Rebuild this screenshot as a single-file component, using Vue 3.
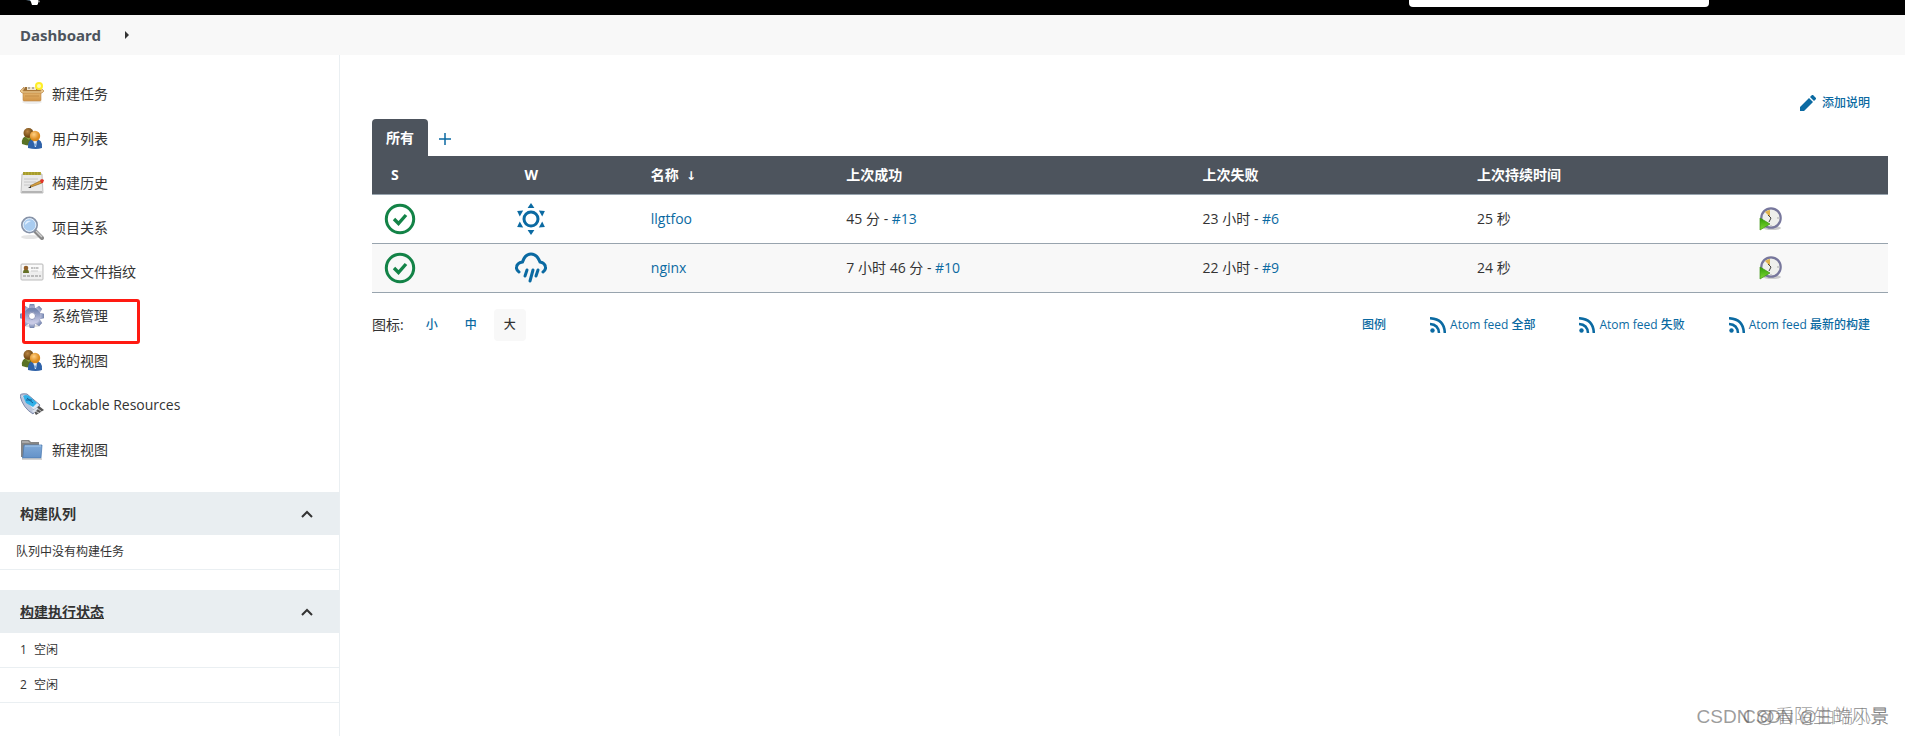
<script setup>
const tasks = [
  { icon: 'box', label: '新建任务' },
  { icon: 'people', label: '用户列表' },
  { icon: 'notepad', label: '构建历史' },
  { icon: 'search', label: '项目关系' },
  { icon: 'card', label: '检查文件指纹' },
  { icon: 'gear', label: '系统管理', marked: true },
  { icon: 'people', label: '我的视图' },
  { icon: 'usb', label: 'Lockable Resources', latin: true },
  { icon: 'folder', label: '新建视图' },
]
const jobs = [
  { name: 'llgtfoo', weather: 'sun', ok: '45 分', okNo: '#13', fail: '23 小时', failNo: '#6', time: '25 秒' },
  { name: 'nginx', weather: 'rain', ok: '7 小时 46 分', okNo: '#10', fail: '22 小时', failNo: '#9', time: '24 秒' },
]
const feeds = ['Atom feed 全部', 'Atom feed 失败', 'Atom feed 最新的构建']
const rays = [0, 60, 120, 180, 240, 300]
const teeth = [0, 45, 90, 135, 180, 225, 270, 315]
</script>

<template>
  <div class="page">
    <svg class="defs" width="0" height="0" aria-hidden="true">
      <defs>
        <linearGradient id="boxFill" x2="0" y2="1"><stop stop-color="#e6b873" /><stop offset="1" stop-color="#d19446" /></linearGradient>
        <linearGradient id="folderFill" x2="0" y2="1"><stop stop-color="#7fa9d8" /><stop offset="1" stop-color="#6492c8" /></linearGradient>
        <linearGradient id="gearFill" x2="0" y2="1"><stop stop-color="#7587b0" /><stop offset="1" stop-color="#c9cbe6" /></linearGradient>
        <radialGradient id="headFill" cx=".4" cy=".35"><stop stop-color="#ffd083" /><stop offset="1" stop-color="#dc8b1e" /></radialGradient>
        <radialGradient id="backFill" cx=".4" cy=".35"><stop stop-color="#b98545" /><stop offset="1" stop-color="#754c15" /></radialGradient>
        <linearGradient id="playFill" x2="0" y2="1"><stop stop-color="#2f9d06" /><stop offset="1" stop-color="#7fd932" /></linearGradient>
      </defs>
    </svg>

    <header class="topbar">
      <svg class="logo" viewBox="0 0 16 6" aria-hidden="true"><path d="M0 0h5v1z" fill="#7c9bb0" /><path d="M4 0h8v4l-1 1H6L5 2z" fill="#fff" /><path d="M12 0l2 1-1 2-1-1z" fill="#999" /></svg>
      <input class="search" type="text" aria-label="查找" />
    </header>

    <nav class="crumbs">
      <a href="#">Dashboard</a>
      <svg width="5" height="8" viewBox="0 0 5 8" aria-hidden="true"><path d="M0 0l4 4-4 4z" fill="#333" /></svg>
    </nav>

    <div class="body">
      <aside class="side">
        <nav class="tasks">
          <a v-for="t in tasks" :key="t.label" href="#" class="task">
            <svg v-if="t.icon === 'box'" viewBox="0 0 24 24">
              <ellipse cx="12" cy="20" rx="10" ry="2" fill="#eee" />
              <path d="M5 5h14l2 4H3z" fill="#9b6f35" /><path d="M7 5h9v3H7z" fill="#f2e5ce" /><path d="M8 6h2m2 0h2" stroke="#777" />
              <path d="M3 9h18v9q0 1-1 1H4q-1 0-1-1z" fill="url(#boxFill)" stroke="#bd8746" stroke-width=".6" />
              <path d="M4 5L0 9l2 2h20l2-2-4-4 1 4H3z" fill="#eac98f" stroke="#b27b38" stroke-width=".6" />
              <path d="M5 14h14" stroke="#c48e48" />
              <circle cx="19" cy="4" r="4" fill="#ffee26" /><circle cx="19" cy="4" r="2" fill="#fffbb0" />
            </svg>
            <svg v-else-if="t.icon === 'people'" viewBox="0 0 24 24">
              <path d="M2 17q-1-8 6-8t8 8q-5 3-14 0z" fill="#597225" /><path d="M5 10l4 3 2-3z" fill="#8aa342" />
              <circle cx="8.500" cy="6" r="5" fill="url(#backFill)" />
              <path d="M8 21q-1-9 7-9 8 0 7 9-6 2-14 0z" fill="#2f62a8" /><path d="M13 13h4l-1 7h-1z" fill="#f2f7ff" /><path d="M15 15l1 3-1 2-1-2z" fill="#6798cf" />
              <circle cx="15" cy="9" r="5.200" fill="url(#headFill)" />
            </svg>
            <svg v-else-if="t.icon === 'notepad'" viewBox="0 0 24 24">
              <path d="M2 3h20l1 19H1z" fill="#e9e9e9" stroke="#aaa" stroke-width=".7" /><path d="M2 20h20v2H2z" fill="#b4b4b4" />
              <path d="M3 1h18v3H3z" fill="#b5ab38" /><path d="M4 1v3m3-3v3m3-3v3m3-3v3m3-3v3m3-3v3" stroke="#9a8e24" />
              <path d="M4 8h14M4 11h12M4 14h8" stroke="#c6c6c6" />
              <path d="M10 15l10-5 2 2-11 4z" fill="#dca43f" stroke="#8c6420" stroke-width=".7" /><path d="M20 9l2-1 2 1-1 3-2 0z" fill="#e0342a" /><path d="M8 17l3-2v2z" fill="#333" />
            </svg>
            <svg v-else-if="t.icon === 'search'" viewBox="0 0 24 24">
              <ellipse cx="10" cy="21" rx="9" ry="2" fill="#e5e5e5" />
              <path d="M15 15l7 7" stroke="#888" stroke-width="4" stroke-linecap="round" /><path d="M16 15l6 6" stroke="#ccc" stroke-width="1.500" />
              <circle cx="9.500" cy="9" r="7.500" fill="#a9ccf0" stroke="#8793a8" stroke-width="2" /><circle cx="9.500" cy="9" r="6.400" fill="none" stroke="#e8f3ff" />
              <path d="M5 9q0-5 6-4-3 1-6 4z" fill="#e2f0ff" />
            </svg>
            <svg v-else-if="t.icon === 'card'" viewBox="0 0 24 24">
              <rect x="1" y="4" width="22" height="16" rx="1" fill="#eee" stroke="#bbb" /><path d="M2 5h20v6H2z" fill="#fafafa" />
              <path d="M3 13q0-4 3-4t3 4z" fill="#657127" /><circle cx="6" cy="8" r="2.300" fill="#92602a" />
              <path d="M11 8h8" stroke="#888" stroke-dasharray="2 .5" /><path d="M11 11h7" stroke="#ccc" /><path d="M3 16h18" stroke="#888" stroke-dasharray="3 1" />
            </svg>
            <svg v-else-if="t.icon === 'gear'" viewBox="0 0 24 24">
              <ellipse cx="12" cy="22" rx="8" ry="1" fill="#ddd" />
              <path v-for="a in teeth" :key="a" d="M9 5l1-5h4l1 5z" fill="url(#gearFill)" stroke="#7781aa" stroke-width=".5" :transform="`rotate(${a} 12 12)`" />
              <circle cx="12" cy="12" r="6" fill="none" stroke="url(#gearFill)" stroke-width="5" /><circle cx="12" cy="12" r="3.500" fill="#fff" stroke="#8790b5" />
            </svg>
            <svg v-else-if="t.icon === 'usb'" viewBox="0 0 24 24">
              <path d="M0 3q0-3 7-2l13 11-7 9Q3 15 0 3z" fill="#bbc5da" stroke="#54628c" stroke-width=".7" /><path d="M2 3l5-1 12 10-5 5z" fill="#e3e9f4" />
              <path d="M3 3q3-2 6 0l8 7-4 4-7-4z" fill="#31b0e8" /><path d="M7 5l6 5M6 7l6 0" stroke="#145d94" />
              <path d="M13 17l6-4 5 4-8 5z" fill="#555" /><path d="M17 15l5 4M15 18l4 2" stroke="#ccc" /><path d="M12 18l5-4 1 2-4 4z" fill="#dbe2ee" />
            </svg>
            <svg v-else viewBox="0 0 24 24">
              <path d="M1 3q0-1 1-1h7l2 2h8v15H1z" fill="#858585" /><path d="M2 3h6l2 2H2z" fill="#aaa" />
              <path d="M4 7h18l-1 13H2q1 0 1-2z" fill="url(#folderFill)" stroke="#4777ad" stroke-width=".7" /><path d="M5 8h16" stroke="#a8c9ea" /><path d="M2 21h20" stroke="#aaa" />
            </svg>
            <span :class="{ latin: t.latin }">{{ t.label }}</span>
            <i v-if="t.marked" class="marker"></i>
          </a>
        </nav>

        <section class="pane">
          <h2>构建队列
            <button type="button" aria-label="收起构建队列"><svg width="12" height="8" viewBox="0 0 12 8"><path d="M1 7l5-5 5 5" /></svg></button>
          </h2>
          <p class="line empty">队列中没有构建任务</p>
        </section>
        <section class="pane">
          <h2><a href="#">构建执行状态</a>
            <button type="button" aria-label="收起构建执行状态"><svg width="12" height="8" viewBox="0 0 12 8"><path d="M1 7l5-5 5 5" /></svg></button>
          </h2>
          <p v-for="n in 2" :key="n" class="line"><span>{{ n }}</span><span>空闲</span></p>
        </section>
      </aside>

      <main class="main">
        <a href="#" class="describe">
          <svg width="16" height="16" viewBox="0 0 16 16"><path d="M0 16v-4L9 3l4 4-9 9zM10 2l2-2h1l3 3v1l-2 2z" /></svg>
          添加说明
        </a>
        <div class="tabs">
          <a href="#" class="tab">所有</a>
          <a href="#" class="add" aria-label="新建视图"><svg width="12" height="12" viewBox="0 0 12 12"><path d="M6 0v12M0 6h12" /></svg></a>
        </div>
        <table>
          <colgroup><col class="c1" /><col class="c2" /><col class="c3" /><col class="c4" /><col class="c5" /><col class="c6" /><col /></colgroup>
          <thead>
            <tr><th class="first">S</th><th class="mid">W</th><th>名称 &nbsp;<span class="arrow">↓</span></th><th>上次成功</th><th>上次失败</th><th>上次持续时间</th><th></th></tr>
          </thead>
          <tbody>
            <tr v-for="j in jobs" :key="j.name">
              <td class="status">
                <svg width="32" height="32" viewBox="0 0 32 32"><circle cx="16" cy="16" r="13.700" fill="none" stroke="#138347" stroke-width="3" /><path d="M10 16l4.500 4.500L22 12" fill="none" stroke="#138347" stroke-width="3.400" /></svg>
              </td>
              <td class="mid">
                <svg v-if="j.weather === 'sun'" width="32" height="32" viewBox="0 0 32 32"><circle cx="16" cy="16" r="7" fill="none" stroke="#0b6aa2" stroke-width="3" /><path v-for="a in rays" :key="a" d="M16 0l3.400 5h-6.800z" fill="#0b6aa2" :transform="`rotate(${a} 16 16)`" /></svg>
                <svg v-else width="32" height="32" viewBox="0 0 32 32" fill="none" stroke="#0b6aa2" stroke-width="3" stroke-linecap="round"><path d="M4 20Q1 18 1.500 15q.5-4 6-5Q10 2 16 2t9 8q5 1 5.500 5 .5 3-2.500 5" /><path d="M12 18l-2 6M18 18l-3 11M23 18l-2 6" /></svg>
              </td>
              <td><a href="#">{{ j.name }}</a></td>
              <td>{{ j.ok }} - <a href="#">{{ j.okNo }}</a></td>
              <td>{{ j.fail }} - <a href="#">{{ j.failNo }}</a></td>
              <td>{{ j.time }}</td>
              <td class="run">
                <a href="#" :aria-label="`构建 ${j.name}`">
                  <svg width="24" height="24" viewBox="0 0 24 24"><ellipse cx="14" cy="21" rx="9" ry="2" fill="#ccc" /><circle cx="13" cy="11" r="9.700" fill="#eeefec" stroke="#77779c" stroke-width="2.200" /><path d="M12 10L7 5q3-2 5-2z" fill="#dfb34c" /><path d="M10 8l3 3-2 4" fill="none" stroke="#444" /><path d="M19 11h2M13 18v1" stroke="#aaa" /><path d="M2 11l10 6-10 6z" fill="url(#playFill)" stroke="#409515" stroke-width=".7" /></svg>
                </a>
              </td>
            </tr>
          </tbody>
        </table>
        <footer class="foot">
          <div class="sizes"><span>图标:</span><a href="#">小</a><a href="#">中</a><b>大</b></div>
          <div class="feeds">
            <a href="#">图例</a>
            <a v-for="f in feeds" :key="f" href="#">
              <svg width="16" height="16" viewBox="0 0 16 16"><circle cx="2.500" cy="13.500" r="2.200" fill="#0b6aa2" /><path d="M0 1.200q14.500.8 14.800 14.800M0 7q8.500.5 9 9" fill="none" stroke="#0b6aa2" stroke-width="2.500" /></svg>
              {{ f }}
            </a>
          </div>
        </footer>
      </main>
    </div>
    <div class="watermark"><span>CSDN @看陌生的风景</span><span class="second">CSDN @曲端小景</span></div>
  </div>
</template>

<style>
body { margin: 0; }
</style>

<style scoped>
.page { position: relative; min-height: 100vh; display: flex; flex-direction: column; overflow: hidden; background: #fff; color: #333; font: 14px/20px "Open Sans", "Noto Sans CJK SC", sans-serif; box-sizing: border-box; }
.defs { position: absolute; }
a { color: #0b6aa2; text-decoration: none; font-weight: 500; }
svg { display: block; flex: none; }
.topbar { height: 15px; background: #000; display: flex; align-items: flex-start; justify-content: space-between; }
.logo { width: 16px; height: 6px; margin-left: 26px; }
.search { box-sizing: border-box; width: 300px; height: 7px; margin-right: 196px; padding: 0; border: 0; border-radius: 0 0 4px 4px; background: #fff; }
.crumbs { height: 40px; padding-left: 20px; display: flex; align-items: center; gap: 24px; background: #f8f8f8; }
.crumbs a { color: #4d545d; font-family: "Noto Sans", sans-serif; font-size: 15px; font-weight: 700; }
.body { flex: 1; display: flex; }
.side { flex: none; width: 340px; box-sizing: border-box; border-right: 1px solid #eaeff2; }
.tasks { display: grid; grid-auto-rows: 1fr; min-height: 400px; padding: 17px 0 20px; }
.task { position: relative; display: flex; align-items: center; gap: 8px; padding-left: 20px; color: #333; font-weight: 400; }
.task .latin { font-weight: 500; }
.task svg { width: 24px; height: 24px; }
.marker { position: absolute; left: 22px; top: 5px; width: 118px; height: 45px; box-sizing: border-box; border: 3px solid #ff1a12; border-radius: 3px; }
.pane { margin-bottom: 20px; }
.pane h2 { margin: 0; height: 43px; padding: 0 26px 0 20px; display: flex; align-items: center; justify-content: space-between; background: #e9eef1; font-size: 14px; font-weight: 600; }
.pane h2 a { color: #333; font-weight: 600; text-decoration: underline; }
.pane button { padding: 0; border: 0; background: none; }
.pane button path { fill: none; stroke: #333; stroke-width: 2; }
.line { margin: 0; height: 34px; padding-left: 20px; display: flex; align-items: center; gap: 7px; border-bottom: 1px solid #eaeff2; font-size: 12px; }
.empty { padding-left: 16px; }
.main { flex: 1; min-width: 0; padding: 38px 17px 0 32px; }
.describe { display: flex; width: max-content; margin: 0 18px 6px auto; align-items: center; gap: 6px; font-size: 12px; }
.describe path { fill: #0b6aa2; }
.tabs { display: flex; }
.tab { height: 37px; padding: 0 14px; display: flex; align-items: center; border-radius: 4px 4px 0 0; background: #4d545d; color: #fff; font-weight: 700; }
.add { display: flex; align-items: center; padding: 3px 11px 0; }
.add path { stroke: #0b6aa2; stroke-width: 1.5; }
table { width: 100%; table-layout: fixed; border-collapse: collapse; }
.c1 { width: 3.4%; } .c2 { width: 14.2%; } .c3 { width: 12.9%; } .c4 { width: 23.5%; } .c5 { width: 18.1%; } .c6 { width: 12.3%; }
th { box-sizing: border-box; height: 38px; padding: 1px 12px 0; background: #4d545d; color: #fff; text-align: left; border-bottom: 1px solid #98a4ae; }
th.first { padding-left: 19px; }
.arrow { font-family: "DejaVu Sans", sans-serif; font-size: 12px; }
td { box-sizing: border-box; height: 49px; padding: 0 12px; border-bottom: 1px solid #98a4ae; }
td.status { padding-right: 0; }
tbody tr:nth-child(even) { background: #f8f8f8; }
th.mid, td.mid { text-align: center; }
.mid svg { margin: 0 auto; }
.run svg { margin: 0 auto; }
.foot { display: flex; justify-content: space-between; align-items: center; padding: 16px 18px 0 0; }
.sizes { display: flex; align-items: center; height: 32px; }
.sizes span { margin-right: 12px; }
.sizes a, .sizes b { width: 32px; margin-right: 7px; line-height: 32px; text-align: center; font-size: 12px; }
.sizes b { border-radius: 4px; background: #f8f8f8; font-weight: 500; }
.feeds { display: flex; gap: 44px; font-size: 12px; }
.feeds a { display: flex; align-items: center; gap: 4px; }
.watermark { position: absolute; right: 16px; bottom: 5px; display: grid; justify-items: end; font: 19px/28px "Liberation Sans", "Noto Sans CJK SC", sans-serif; font-weight: 300; color: rgba(90, 90, 90, .6); }
.watermark span { grid-area: 1 / 1; }
.watermark .second { font-size: 18px; }
</style>
